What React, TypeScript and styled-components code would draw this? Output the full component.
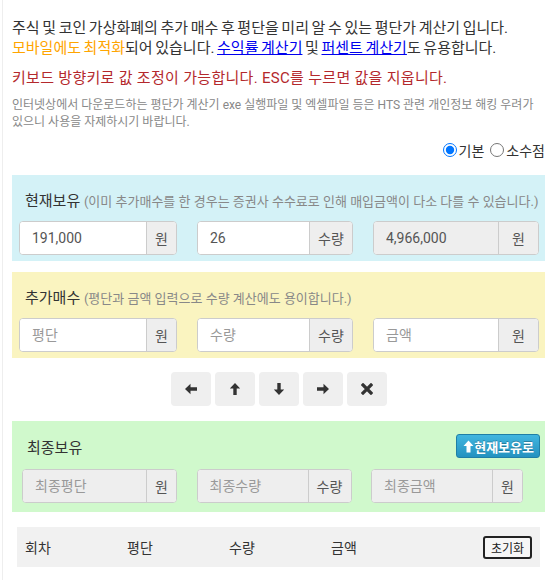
import * as React from "react";
import styled, { createGlobalStyle } from "styled-components";

const GlobalStyle = createGlobalStyle`
  html, body {
    margin: 0;
    padding: 0;
    background: #fff;
  }
  body {
    font-family: Roboto, "Noto Sans CJK KR", sans-serif;
    color: #333;
  }
`;

const Page = styled.div`
  margin-left: 2px;
  border-left: 1px solid #eee;
  padding: 18px 10px 12px 9px;
  min-height: 550px;
`;

const Intro = styled.p`
  margin: 0;
  font-size: 15px;
  line-height: 20px;
  word-spacing: -1.1px;
  color: #333;
`;

const Orange = styled.span`
  color: #ffa500;
`;

const Link = styled.a`
  color: #0000ee;
  text-decoration: underline;
`;

const Warning = styled.p`
  margin: 10px 0 0;
  font-size: 15px;
  line-height: 20px;
  letter-spacing: 0.3px;
  color: #b4282c;
`;

const Notice = styled.p`
  margin: 9px 0 0;
  font-size: 12px;
  line-height: 17px;
  color: #888;
`;

const RadioRow = styled.div`
  display: flex;
  justify-content: flex-end;
  align-items: center;
  margin-top: 9px;
  font-size: 14px;
  color: #333;
`;

const RadioLabel = styled.label`
  display: flex;
  align-items: center;
  margin-left: 6px;
`;

const Radio = styled.input`
  margin: 0 2px 0 0;
  width: 14px;
  height: 14px;
`;

const Panel = styled.section<{ $bg: string; $gap: number; $bottom: number }>`
  background: ${p => p.$bg};
  margin-top: ${p => p.$gap}px;
  padding: 13px 6px ${p => p.$bottom}px 7px;
`;

const PanelHead = styled.div`
  display: flex;
  align-items: center;
  justify-content: space-between;
  height: 22px;
  padding-left: 6px;
  font-size: 15px;
  color: #333;
`;

const Hint = styled.span`
  font-size: 13px;
  color: #888;
`;

const Fields = styled.div<{ $cols: string; $left: number; $right: number }>`
  display: grid;
  grid-template-columns: ${p => p.$cols};
  justify-content: space-between;
  margin-top: 11px;
  padding: 0 ${p => p.$right}px 0 ${p => p.$left}px;
`;

const Group = styled.div`
  display: flex;
  height: 34px;
  box-sizing: border-box;
  border: 1px solid #ccc;
  border-radius: 4px;
  overflow: hidden;
  background: #fff;
`;

const Field = styled.input`
  flex: 1;
  min-width: 0;
  width: 0;
  border: none;
  outline: none;
  padding: 0 12px;
  font-family: inherit;
  font-size: 14px;
  color: #555;
  background: #fff;
  &::placeholder {
    color: #999;
  }
  &:disabled,
  &[readonly] {
    background: #eee;
  }
`;

const Addon = styled.span<{ $w: number }>`
  display: flex;
  align-items: center;
  justify-content: center;
  flex: none;
  width: ${p => p.$w}px;
  border-left: 1px solid #ccc;
  background: #eee;
  font-size: 14px;
  color: #555;
`;

const KeyRow = styled.div`
  display: flex;
  justify-content: center;
  gap: 4px;
  margin-top: 14px;
`;

const KeyButton = styled.button`
  width: 40px;
  height: 34px;
  border: none;
  border-radius: 4px;
  background: #efefef;
  display: flex;
  align-items: center;
  justify-content: center;
  padding: 0;
  color: #333;
`;

const GreenHead = styled(PanelHead)`
  height: 24px;
  padding-left: 8px;
`;

const ToCurrent = styled.button`
  display: flex;
  align-items: center;
  height: 24px;
  padding: 0 5px 0 6px;
  margin-right: -1px;
  border: 1px solid #1f7fa6;
  border-radius: 3px;
  background: linear-gradient(#41b6df, #2492c0);
  color: #fff;
  text-shadow: 0 -1px 0 rgba(0, 0, 0, 0.25);
  font-family: inherit;
  font-size: 13px;
  font-weight: bold;
`;

const Table = styled.div`
  display: flex;
  align-items: center;
  height: 40px;
  margin: 15px 5px 0 5px;
  padding: 0 8px;
  background: #f1f1f1;
  font-size: 14px;
  color: #333;
`;

const Col = styled.span`
  width: 102px;
`;

const Reset = styled.button`
  margin-left: auto;
  height: 23px;
  padding: 0 6px;
  border: 2px solid #222;
  border-radius: 3px;
  background: #f6f6f6;
  font-family: inherit;
  font-size: 12px;
  color: #222;
`;

function Arrow({ dir }: { dir: "left" | "up" | "down" | "right" }) {
  const rot = { left: 0, up: 90, down: 270, right: 180 }[dir];
  return (
    <svg width="14" height="14" viewBox="0 0 14 14" style={{ transform: `rotate(${rot}deg)` }}>
      <path d="M1 7 L6.5 1.8 L6.5 5.3 L13 5.3 L13 8.7 L6.5 8.7 L6.5 12.2 Z" fill="#333" />
    </svg>
  );
}

function Cross() {
  return (
    <svg width="12" height="12" viewBox="0 0 12 12">
      <path d="M2 2 L10 10 M10 2 L2 10" stroke="#333" strokeWidth="3.2" strokeLinecap="square" />
    </svg>
  );
}

function UpArrow() {
  return (
    <svg width="11" height="13" viewBox="0 0 11 13">
      <path d="M5.5 0.5 L10.5 6 L7.5 6 L7.5 12.5 L3.5 12.5 L3.5 6 L0.5 6 Z" fill="#fff" />
    </svg>
  );
}

export default function App() {
  return (
    <>
      <GlobalStyle />
      <Page>
        <Intro>
          주식 및 코인 가상화폐의 추가 매수 후 평단을 미리 알 수 있는 평단가 계산기 입니다.
          <br />
          <Orange>모바일에도 최적화</Orange>되어 있습니다. <Link href="#">수익률 계산기</Link> 및{" "}
          <Link href="#">퍼센트 계산기</Link>도 유용합니다.
        </Intro>
        <Warning>키보드 방향키로 값 조정이 가능합니다. ESC를 누르면 값을 지웁니다.</Warning>
        <Notice>
          인터넷상에서 다운로드하는 평단가 계산기 exe 실행파일 및 엑셀파일 등은 HTS 관련 개인정보 해킹 우려가
          있으니 사용을 자제하시기 바랍니다.
        </Notice>

        <RadioRow>
          <RadioLabel>
            <Radio type="radio" name="mode" defaultChecked />
            기본
          </RadioLabel>
          <RadioLabel>
            <Radio type="radio" name="mode" />
            소수점
          </RadioLabel>
        </RadioRow>

        <Panel $bg="#d4f2f7" $gap={15} $bottom={6}>
          <PanelHead>
            <span>
              현재보유 <Hint>(이미 추가매수를 한 경우는 증권사 수수료로 인해 매입금액이 다소 다를 수 있습니다.)</Hint>
            </span>
          </PanelHead>
          <Fields $cols="158px 156px 166px" $left={0} $right={0}>
            <Group>
              <Field defaultValue="191,000" />
              <Addon $w={29}>원</Addon>
            </Group>
            <Group>
              <Field defaultValue="26" />
              <Addon $w={42}>수량</Addon>
            </Group>
            <Group>
              <Field defaultValue="4,966,000" readOnly />
              <Addon $w={39}>원</Addon>
            </Group>
          </Fields>
        </Panel>

        <Panel $bg="#faf4c0" $gap={11} $bottom={6}>
          <PanelHead>
            <span>
              추가매수 <Hint>(평단과 금액 입력으로 수량 계산에도 용이합니다.)</Hint>
            </span>
          </PanelHead>
          <Fields $cols="158px 156px 166px" $left={0} $right={0}>
            <Group>
              <Field placeholder="평단" />
              <Addon $w={29}>원</Addon>
            </Group>
            <Group>
              <Field placeholder="수량" />
              <Addon $w={42}>수량</Addon>
            </Group>
            <Group>
              <Field placeholder="금액" />
              <Addon $w={39}>원</Addon>
            </Group>
          </Fields>
        </Panel>

        <KeyRow>
          <KeyButton aria-label="left"><Arrow dir="left" /></KeyButton>
          <KeyButton aria-label="up"><Arrow dir="up" /></KeyButton>
          <KeyButton aria-label="down"><Arrow dir="down" /></KeyButton>
          <KeyButton aria-label="right"><Arrow dir="right" /></KeyButton>
          <KeyButton aria-label="clear"><Cross /></KeyButton>
        </KeyRow>

        <Panel $bg="#d0f9cc" $gap={15} $bottom={9}>
          <GreenHead>
            <span>최종보유</span>
            <ToCurrent>
              <UpArrow />
              현재보유로
            </ToCurrent>
          </GreenHead>
          <Fields $cols="155px 155px 152px" $left={3} $right={16}>
            <Group>
              <Field placeholder="최종평단" disabled />
              <Addon $w={29}>원</Addon>
            </Group>
            <Group>
              <Field placeholder="최종수량" disabled />
              <Addon $w={42}>수량</Addon>
            </Group>
            <Group>
              <Field placeholder="최종금액" disabled />
              <Addon $w={29}>원</Addon>
            </Group>
          </Fields>
        </Panel>

        <Table>
          <Col>회차</Col>
          <Col>평단</Col>
          <Col>수량</Col>
          <Col>금액</Col>
          <Reset>초기화</Reset>
        </Table>
      </Page>
    </>
  );
}
